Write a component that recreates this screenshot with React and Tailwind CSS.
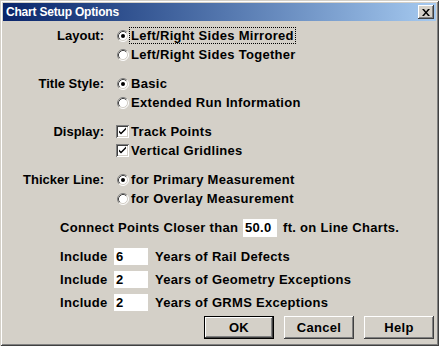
import React, { useState } from "react";

function Radio({ checked }) {
  return (
    <svg width="12" height="12" viewBox="0 0 12 12" className="shrink-0">
      <circle cx="6" cy="6" r="5" fill="#ffffff" />
      <path d="M2.11 9.89 A5.5 5.5 0 0 1 9.89 2.11" stroke="#808080" strokeWidth="1" fill="none" />
      <path d="M9.89 2.11 A5.5 5.5 0 0 1 2.11 9.89" stroke="#ffffff" strokeWidth="1" fill="none" />
      <path d="M2.82 9.18 A4.5 4.5 0 0 1 9.18 2.82" stroke="#404040" strokeWidth="1" fill="none" />
      <path d="M9.18 2.82 A4.5 4.5 0 0 1 2.82 9.18" stroke="#d4d0c8" strokeWidth="1" fill="none" />
      {checked && <circle cx="6" cy="6" r="2" fill="#000000" />}
    </svg>
  );
}

function Check({ checked }) {
  return (
    <div className="w-[13px] h-[13px] shrink-0 bg-white shadow-[inset_1px_1px_0_#808080,inset_-1px_-1px_0_#ffffff,inset_2px_2px_0_#404040,inset_-2px_-2px_0_#d4d0c8] flex items-center justify-center">
      {checked && (
        <svg width="9" height="9" viewBox="0 0 9 9">
          <path d="M1 3.5 L1 5.5 L3 7.5 L8 2.5 L8 0.5 L3 5.5 Z" fill="#000000" />
        </svg>
      )}
    </div>
  );
}

function Option({ type = "radio", checked, focused, children }) {
  return (
    <div className="h-[19px] flex items-center">
      {type === "radio" ? (
        <div className="w-[12px] flex">
          <Radio checked={checked} />
        </div>
      ) : (
        <div className="-ml-[1px] w-[13px] flex">
          <Check checked={checked} />
        </div>
      )}
      <span
        className={
          "h-[17px] flex items-center px-[1px] border border-dotted " +
          (focused ? "border-black" : "border-transparent")
        }>
        {children}
      </span>
    </div>
  );
}

function Group({ label, children }) {
  return (
    <div className="flex">
      <div className="w-[101px] h-[19px] flex items-center justify-end tracking-normal">{label}</div>
      <div className="ml-[13px] flex flex-col">{children}</div>
    </div>
  );
}

function Field({ value, className }) {
  return (
    <div className={"bg-white flex items-center pl-[2px] " + className}>{value}</div>
  );
}

function Button({ children, isDefault }) {
  return (
    <button
      className={
        "w-[70px] h-[23px] flex items-center justify-center bg-[#d4d0c8] " +
        (isDefault
          ? "border border-black shadow-[inset_-1px_-1px_0_#404040,inset_1px_1px_0_#ffffff,inset_-2px_-2px_0_#808080]"
          : "shadow-[inset_-1px_-1px_0_#404040,inset_1px_1px_0_#ffffff,inset_-2px_-2px_0_#808080]")
      }>
      {children}
    </button>
  );
}

export default function App() {
  const [layout] = useState("mirrored");

  return (
    <div className="w-[439px] h-[346px] bg-[#d4d0c8] p-[3px] flex flex-col shadow-[inset_1px_1px_0_#d4d0c8,inset_-1px_-1px_0_#404040,inset_2px_2px_0_#ffffff,inset_-2px_-2px_0_#808080] font-['Liberation_Sans',Arial,sans-serif] font-bold text-[13px] tracking-[0.3px] text-black select-none">
      {/* title bar */}
      <div className="h-[18px] flex items-center bg-linear-to-r from-[#0a246a] to-[#a6caf0] pl-[3px] pr-[2px]">
        <span className="text-white text-[12px] tracking-[-0.2px]">Chart Setup Options</span>
        <div className="ml-auto w-[16px] h-[14px] bg-[#d4d0c8] flex items-center justify-center shadow-[inset_-1px_-1px_0_#404040,inset_1px_1px_0_#ffffff,inset_-2px_-2px_0_#808080]">
          <svg width="8" height="7" viewBox="0 0 8 7">
            <path d="M0 0 L2 0 L4 2.5 L6 0 L8 0 L5 3.5 L8 7 L6 7 L4 4.5 L2 7 L0 7 L3 3.5 Z" fill="#000000" />
          </svg>
        </div>
      </div>

      <div className="flex flex-col pt-[5px]">
        <div className="flex flex-col gap-[10px]">
          <Group label="Layout:">
            <Option checked={layout === "mirrored"} focused>
              Left/Right Sides Mirrored
            </Option>
            <Option checked={layout === "together"}>Left/Right Sides Together</Option>
          </Group>

          <Group label="Title Style:">
            <Option checked>Basic</Option>
            <Option>Extended Run Information</Option>
          </Group>

          <Group label="Display:">
            <Option type="check" checked>
              Track Points
            </Option>
            <Option type="check" checked>
              Vertical Gridlines
            </Option>
          </Group>

          <Group label="Thicker Line:">
            <Option checked>for Primary Measurement</Option>
            <Option>for Overlay Measurement</Option>
          </Group>

          <div className="flex items-center h-[19px] pl-[57px]">
            <span className="w-[183px] whitespace-nowrap">Connect Points Closer than</span>
            <Field value="50.0" className="w-[34px] h-[18px]" />
            <span className="ml-[6px] whitespace-nowrap">ft. on Line Charts.</span>
          </div>
        </div>

        <div className="flex flex-col gap-[4px] mt-[10px]">
          {[
            ["6", "Years of Rail Defects"],
            ["2", "Years of Geometry Exceptions"],
            ["2", "Years of GRMS Exceptions"],
          ].map(([n, text], i) => (
            <div key={i} className="flex items-center h-[19px] pl-[57px]">
              <span className="w-[54px]">Include</span>
              <Field value={n} className="w-[34px] h-[17px]" />
              <span className="ml-[7px] whitespace-nowrap">{text}</span>
            </div>
          ))}
        </div>

        <div className="flex justify-end gap-[10px] mt-[4px] pr-[2px]">
          <Button isDefault>OK</Button>
          <Button>Cancel</Button>
          <Button>Help</Button>
        </div>
      </div>
    </div>
  );
}
